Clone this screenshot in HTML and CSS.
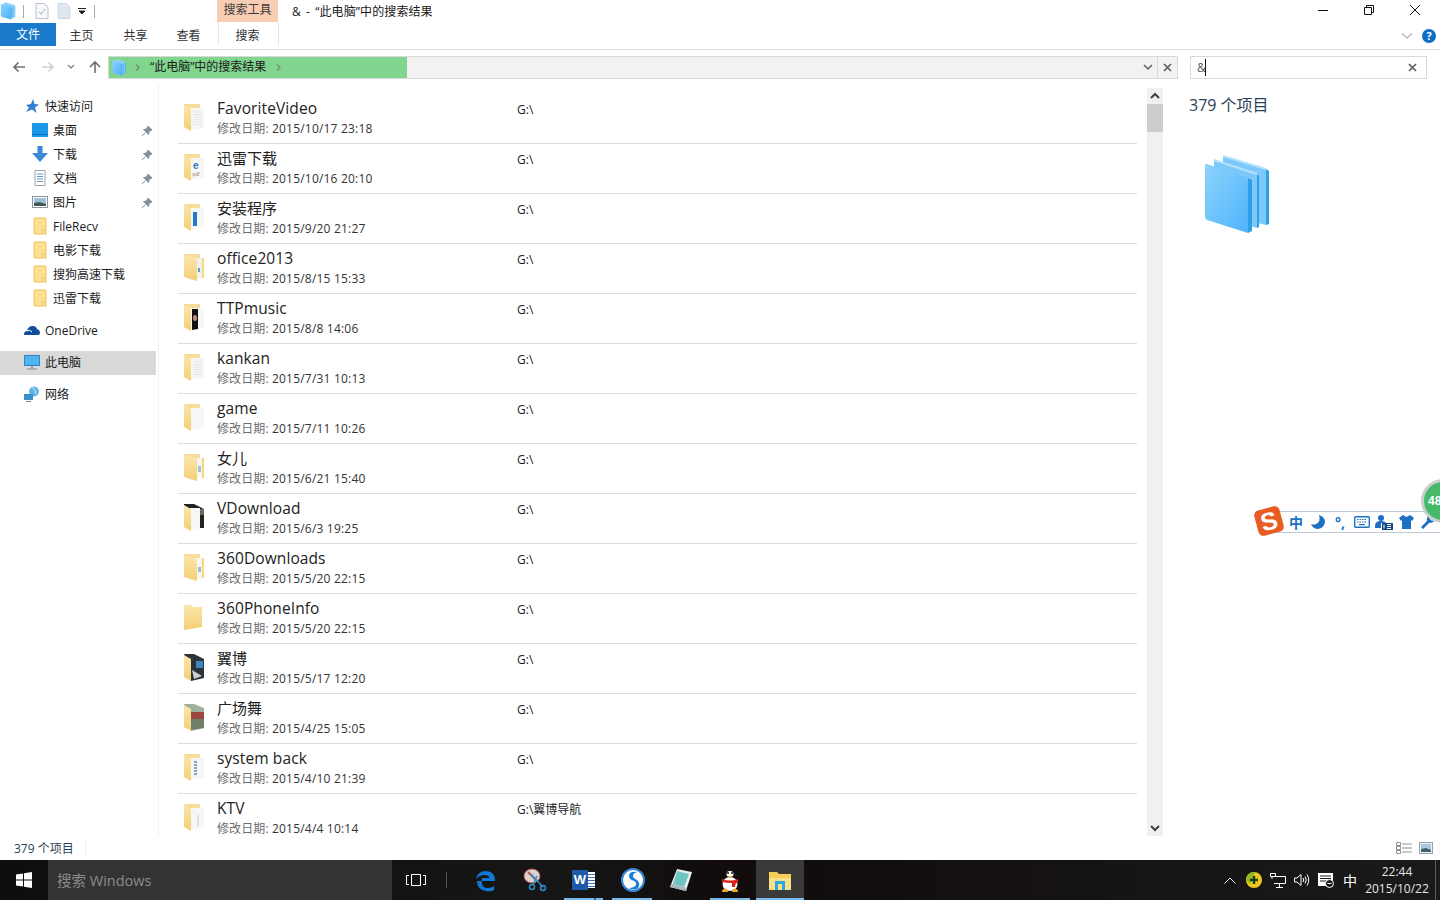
FILE: index.html
```html
<!DOCTYPE html>
<html lang="zh-CN">
<head>
    <meta charset="UTF-8">
    <title>&amp; - “此电脑”中的搜索结果</title>
    <link rel="stylesheet" href="styles.css">
</head>
<body>
    <!-- shared shapes -->
    <svg class="defs" width="0" height="0">
        <defs>
            <linearGradient id="blueFace" x1="0" y1="0" x2="1" y2="1">
                <stop offset="0" stop-color="#8dd3fb"/>
                <stop offset="1" stop-color="#4fb3fb"/>
            </linearGradient>
            <linearGradient id="flapFace" x1="0" y1="0" x2="0" y2="1">
                <stop offset="0" stop-color="#fbe6ac"/>
                <stop offset="1" stop-color="#f3cf73"/>
            </linearGradient>
            <symbol id="library" viewBox="0 0 66 80">
                <path d="M62 14 L65 16 V69 L62 70 Z" fill="#2f9fe6"/>
                <path d="M19 1 L62 14 V70 L19 60 Z" fill="#7cc8fa"/>
                <path d="M19 1 L62 14" stroke="#b5e2fc" stroke-width="2"/>
                <path d="M53 19 L55 21 V72 L53 73 Z" fill="#2f9fe6"/>
                <path d="M10 5 L53 19 V73 L10 60 Z" fill="#7cc8fa"/>
                <path d="M10 5 L53 19" stroke="#b5e2fc" stroke-width="2"/>
                <path d="M44 23 L48 25 V76 L44 78 Z" fill="#2f9fe6"/>
                <path d="M3 9 L44 23 V78 L3 65 Q1 64 1 61 V11 Q1 8 3 9 Z" fill="url(#blueFace)"/>
            </symbol>
            <symbol id="folder-back" viewBox="0 0 24 30">
                <path d="M2 2 H18 V10 H2 Z" fill="#f8dc9b"/>
                <path d="M8 6 H22 V26 L8 28 Z" fill="#f6f6f4"/>
            </symbol>
            <symbol id="folder-flap" viewBox="0 0 24 30">
                <path d="M2 3 L9 7 V29 L2 25 Z" fill="url(#flapFace)"/>
            </symbol>
            <symbol id="folder-lines" viewBox="0 0 24 30">
                <path d="M11 10 H20 M11 12.5 H20 M11 15 H20 M11 17.5 H20 M11 20 H20 M11 22.5 H20" stroke="#e6e6e6" fill="none"/>
            </symbol>
            <symbol id="nav-folder" viewBox="0 0 14 18">
                <path d="M1 1 H13 V17 H1 Z" fill="#fde08f" stroke="#e9c565"/>
                <path d="M9 17 V13 H13" fill="none" stroke="#e9c565"/>
            </symbol>
            <symbol id="pin" viewBox="0 0 12 12">
                <path d="M7 1 L11 5 L9.5 5.5 L7.5 8 L7.5 9.5 L2.5 4.5 L4 4.5 L6.5 2.5 Z M4.5 7.5 L1 11" fill="#8a9299" stroke="#8a9299"/>
            </symbol>
        </defs>
    </svg>

    <div class="desktop">
        <div class="window">
            <div class="titlebar">
                <div class="quick-tools">
                    <svg class="qa-library" width="16" height="18"><use href="#library"/></svg>
                    <i class="qa-sep"></i>
                    <svg class="qa-doc" width="14" height="16" viewBox="0 0 14 16"><path d="M1 .5 H9 L13 4 V15.5 H1 Z" fill="#f6f8fb" stroke="#b9c3cf"/><path d="M4 9 L6 11 L10 6" fill="none" stroke="#8fb0cc"/></svg>
                    <svg class="qa-doc2" width="14" height="16" viewBox="0 0 14 16"><path d="M1 .5 H9 L13 4 V15.5 H1 Z" fill="#dfe7f3" stroke="#cdd7e4"/></svg>
                    <svg class="qa-drop" width="8" height="8" viewBox="0 0 8 8"><path d="M0 1.5 H8 M1 4 H7 L4 7 Z" stroke="#222" fill="#222"/></svg>
                    <i class="qa-sep qa-sep-end"></i>
                </div>
                <div class="context-head">搜索工具</div>
                <div class="window-title">&amp; - “此电脑”中的搜索结果</div>
                <div class="window-buttons">
                    <svg class="win-btn" width="12" height="12" viewBox="0 0 12 12"><path d="M1 6.5 H11" stroke="#111"/></svg>
                    <svg class="win-btn" width="12" height="12" viewBox="0 0 12 12"><path d="M1.5 3.5 H8.5 V10.5 H1.5 Z M3.5 3.5 V1.5 H10.5 V8.5 H8.5" fill="none" stroke="#111"/></svg>
                    <svg class="win-btn" width="12" height="12" viewBox="0 0 12 12"><path d="M1 1 L11 11 M11 1 L1 11" stroke="#111"/></svg>
                </div>
            </div>

            <div class="ribbon">
                <div class="tab tab-file">文件</div>
                <div class="tab tab-home">主页</div>
                <div class="tab tab-share">共享</div>
                <div class="tab tab-view">查看</div>
                <div class="tab tab-search">搜索</div>
                <div class="ribbon-right">
                    <svg width="12" height="8" viewBox="0 0 12 8"><path d="M1 1.5 L6 6 L11 1.5" fill="none" stroke="#b4b4b4" stroke-width="1.3"/></svg>
                    <span class="help">?</span>
                </div>
            </div>

            <div class="address-row">
                <div class="nav-arrows">
                    <svg width="14" height="12" viewBox="0 0 14 12"><path d="M13 6 H2 M6.5 1.5 L2 6 L6.5 10.5" fill="none" stroke="#6e6e6e" stroke-width="1.6"/></svg>
                    <svg class="arrow-fwd" width="14" height="12" viewBox="0 0 14 12"><path d="M1 6 H12 M7.5 1.5 L12 6 L7.5 10.5" fill="none" stroke="#d0d0d0" stroke-width="1.6"/></svg>
                    <svg class="arrow-down" width="8" height="6" viewBox="0 0 8 6"><path d="M1 1 L4 4 L7 1" fill="none" stroke="#8a8a8a" stroke-width="1.4"/></svg>
                    <svg class="arrow-up" width="14" height="14" viewBox="0 0 14 14"><path d="M7 13 V2 M2 7 L7 2 L12 7" fill="none" stroke="#6e6e6e" stroke-width="1.6"/></svg>
                </div>
                <div class="address-box">
                    <div class="address-progress">
                        <svg width="16" height="17"><use href="#library"/></svg>
                        <svg class="crumb-arrow" width="5" height="7" viewBox="0 0 5 7"><path d="M1 .5 L4 3.5 L1 6.5" fill="none" stroke="#6f8f75" stroke-width="1.3"/></svg>
                        <span class="crumb">“此电脑”中的搜索结果</span>
                        <svg class="crumb-arrow" width="5" height="7" viewBox="0 0 5 7"><path d="M1 .5 L4 3.5 L1 6.5" fill="none" stroke="#6f8f75" stroke-width="1.3"/></svg>
                    </div>
                    <svg class="address-drop" width="10" height="7" viewBox="0 0 10 7"><path d="M1 1 L5 5 L9 1" fill="none" stroke="#5f5f5f" stroke-width="1.5"/></svg>
                    <div class="address-close">
                        <svg width="9" height="9" viewBox="0 0 9 9"><path d="M1 1 L8 8 M8 1 L1 8" stroke="#5f5f5f" stroke-width="1.7"/></svg>
                    </div>
                </div>
                <div class="search-box">
                    <span class="search-text">&amp;</span><i class="caret"></i>
                    <svg class="search-close" width="9" height="9" viewBox="0 0 9 9"><path d="M1 1 L8 8 M8 1 L1 8" stroke="#5f5f5f" stroke-width="1.7"/></svg>
                </div>
            </div>

            <div class="main">
                <nav class="nav-pane">
                    <div class="nav-group">
                        <div class="nav-item">
                            <svg class="nav-icon" width="16" height="16" viewBox="0 0 16 16"><path d="M9 1 L10.5 6 L15 6.5 L11 9.5 L12.5 15 L8 11.5 L2 14 L5 9.5 L2 7 L7 6 Z" fill="#2f7fd3"/></svg>
                            <span>快速访问</span>
                        </div>
                        <div class="nav-item nav-sub">
                            <svg class="nav-icon" width="16" height="14" viewBox="0 0 16 14"><rect width="16" height="14" fill="#1c97ea"/><path d="M1 11.5 H15" stroke="#0f5fa8" stroke-dasharray="2 1"/></svg>
                            <span>桌面</span>
                            <svg class="pin" width="12" height="12"><use href="#pin"/></svg>
                        </div>
                        <div class="nav-item nav-sub">
                            <svg class="nav-icon" width="16" height="16" viewBox="0 0 16 16"><path d="M5.5 0 H10.5 V7 H16 L8 16 L0 7 H5.5 Z" fill="#3c87d6"/></svg>
                            <span>下载</span>
                            <svg class="pin" width="12" height="12"><use href="#pin"/></svg>
                        </div>
                        <div class="nav-item nav-sub">
                            <svg class="nav-icon" width="16" height="16" viewBox="0 0 16 16"><path d="M3 .5 H13 V15.5 H3 Z" fill="#fff" stroke="#9aa4ad"/><path d="M5 4 H11 M5 6.5 H11 M5 9 H11 M5 11.5 H11" stroke="#5f9bc6"/></svg>
                            <span>文档</span>
                            <svg class="pin" width="12" height="12"><use href="#pin"/></svg>
                        </div>
                        <div class="nav-item nav-sub">
                            <svg class="nav-icon" width="16" height="14" viewBox="0 0 16 14"><rect x=".5" y="1.5" width="15" height="11" fill="#fff" stroke="#8b9299"/><rect x="2" y="3" width="12" height="8" fill="#9dc0d6"/><path d="M2 11 V8 L7 7 L14 9 V11 Z" fill="#3f5a56"/></svg>
                            <span>图片</span>
                            <svg class="pin" width="12" height="12"><use href="#pin"/></svg>
                        </div>
                        <div class="nav-item nav-sub">
                            <svg class="nav-icon nav-folder" width="14" height="18"><use href="#nav-folder"/></svg>
                            <span>FileRecv</span>
                        </div>
                        <div class="nav-item nav-sub">
                            <svg class="nav-icon nav-folder" width="14" height="18"><use href="#nav-folder"/></svg>
                            <span>电影下载</span>
                        </div>
                        <div class="nav-item nav-sub">
                            <svg class="nav-icon nav-folder" width="14" height="18"><use href="#nav-folder"/></svg>
                            <span>搜狗高速下载</span>
                        </div>
                        <div class="nav-item nav-sub">
                            <svg class="nav-icon nav-folder" width="14" height="18"><use href="#nav-folder"/></svg>
                            <span>迅雷下载</span>
                        </div>
                    </div>
                    <div class="nav-group">
                        <div class="nav-item">
                            <svg class="nav-icon" width="16" height="12" viewBox="0 0 16 12"><path d="M0 11 Q0 7 3 7 Q4 2 9 2 Q12 2 13 5 Q16 6 16 9 Q16 11 14 11 Z" fill="#124a9c"/><path d="M3 7 Q6 5 8 8" fill="none" stroke="#fff"/></svg>
                            <span>OneDrive</span>
                        </div>
                    </div>
                    <div class="nav-group">
                        <div class="nav-item nav-selected">
                            <svg class="nav-icon" width="16" height="15" viewBox="0 0 16 15"><rect x=".5" y=".5" width="15" height="10" fill="#4fb3ee" stroke="#2b87c7"/><path d="M3 14 H13" stroke="#8ea3b3" stroke-width="1.5"/><path d="M7 11 H9 V13 H7 Z" fill="#8ea3b3"/></svg>
                            <span>此电脑</span>
                        </div>
                    </div>
                    <div class="nav-group">
                        <div class="nav-item">
                            <svg class="nav-icon" width="16" height="16" viewBox="0 0 16 16"><circle cx="10" cy="5.5" r="5" fill="#62b4e6"/><path d="M8 1 Q12 3 12 8" fill="none" stroke="#d5ecf8"/><rect x="0" y="8" width="9" height="6" fill="#3d8fc9"/><path d="M2 15.5 H7" stroke="#6d8ca3"/></svg>
                            <span>网络</span>
                        </div>
                    </div>
                </nav>

                <div class="file-list">
                    <div class="file-row">
                        <svg class="folder" width="24" height="30" viewBox="0 0 24 30"><use href="#folder-back" width="24" height="30"/><use href="#folder-lines" width="24" height="30"/><use href="#folder-flap" width="24" height="30"/></svg>
                        <div><div class="file-name">FavoriteVideo</div><div class="file-date"><span>修改日期:</span> 2015/10/17 23:18</div></div>
                        <div class="file-path">G:\</div>
                    </div>
                    <div class="file-row">
                        <svg class="folder" width="24" height="30" viewBox="0 0 24 30"><use href="#folder-back" width="24" height="30"/><text class="thumb-e" x="11" y="17">e</text><text class="thumb-pdf" x="10.5" y="24">pdf</text><use href="#folder-flap" width="24" height="30"/></svg>
                        <div><div class="file-name file-name-zh">迅雷下载</div><div class="file-date"><span>修改日期:</span> 2015/10/16 20:10</div></div>
                        <div class="file-path">G:\</div>
                    </div>
                    <div class="file-row">
                        <svg class="folder" width="24" height="30" viewBox="0 0 24 30"><use href="#folder-back" width="24" height="30"/><rect x="11" y="10" width="4" height="14" fill="#1f78c8"/><use href="#folder-flap" width="24" height="30"/></svg>
                        <div><div class="file-name file-name-zh">安装程序</div><div class="file-date"><span>修改日期:</span> 2015/9/20 21:27</div></div>
                        <div class="file-path">G:\</div>
                    </div>
                    <div class="file-row">
                        <svg class="folder" width="24" height="30" viewBox="0 0 24 30"><use href="#folder-back" width="24" height="30"/><path d="M14 6 H20 V26 H14 Z" fill="#eef1ee"/><path d="M16 16 H18 V20 H16 Z" fill="#5f9fb5"/><path d="M2 3 L15 7 V29 L2 25 Z" fill="url(#flapFace)"/><path d="M20 6 H22 V26 H20 Z" fill="#f6d67f"/></svg>
                        <div><div class="file-name">office2013</div><div class="file-date"><span>修改日期:</span> 2015/8/15 15:33</div></div>
                        <div class="file-path">G:\</div>
                    </div>
                    <div class="file-row">
                        <svg class="folder" width="24" height="30" viewBox="0 0 24 30"><use href="#folder-back" width="24" height="30"/><path d="M10 7 H16 V27 L10 28 Z" fill="#111"/><ellipse cx="13" cy="16" rx="2" ry="3" fill="#c98a7a"/><use href="#folder-flap" width="24" height="30"/></svg>
                        <div><div class="file-name">TTPmusic</div><div class="file-date"><span>修改日期:</span> 2015/8/8 14:06</div></div>
                        <div class="file-path">G:\</div>
                    </div>
                    <div class="file-row">
                        <svg class="folder" width="24" height="30" viewBox="0 0 24 30"><use href="#folder-back" width="24" height="30"/><use href="#folder-lines" width="24" height="30"/><use href="#folder-flap" width="24" height="30"/></svg>
                        <div><div class="file-name">kankan</div><div class="file-date"><span>修改日期:</span> 2015/7/31 10:13</div></div>
                        <div class="file-path">G:\</div>
                    </div>
                    <div class="file-row">
                        <svg class="folder" width="24" height="30" viewBox="0 0 24 30"><use href="#folder-back" width="24" height="30"/><use href="#folder-flap" width="24" height="30"/></svg>
                        <div><div class="file-name">game</div><div class="file-date"><span>修改日期:</span> 2015/7/11 10:26</div></div>
                        <div class="file-path">G:\</div>
                    </div>
                    <div class="file-row">
                        <svg class="folder" width="24" height="30" viewBox="0 0 24 30"><use href="#folder-back" width="24" height="30"/><path d="M16 14 H19 V20 H16 Z" fill="#a9c2cf"/><path d="M2 3 L15 7 V29 L2 25 Z" fill="url(#flapFace)"/><path d="M20 6 H22 V26 H20 Z" fill="#f6d67f"/></svg>
                        <div><div class="file-name file-name-zh">女儿</div><div class="file-date"><span>修改日期:</span> 2015/6/21 15:40</div></div>
                        <div class="file-path">G:\</div>
                    </div>
                    <div class="file-row">
                        <svg class="folder" width="24" height="30" viewBox="0 0 24 30"><path d="M2 2 H12 L22 7 V10 H2 Z" fill="#222"/><path d="M8 6 H18 V26 L8 28 Z" fill="#f6f6f4"/><path d="M18 7 H22 V13 H18 Z" fill="#6f6a5e"/><path d="M18 13 H22 V26 H18 Z" fill="#222"/><use href="#folder-flap" width="24" height="30"/></svg>
                        <div><div class="file-name">VDownload</div><div class="file-date"><span>修改日期:</span> 2015/6/3 19:25</div></div>
                        <div class="file-path">G:\</div>
                    </div>
                    <div class="file-row">
                        <svg class="folder" width="24" height="30" viewBox="0 0 24 30"><use href="#folder-back" width="24" height="30"/><path d="M16 15 H19 V20 H16 Z" fill="#9dbad0"/><path d="M2 3 L15 7 V29 L2 25 Z" fill="url(#flapFace)"/><path d="M20 6 H22 V26 H20 Z" fill="#f6d67f"/></svg>
                        <div><div class="file-name">360Downloads</div><div class="file-date"><span>修改日期:</span> 2015/5/20 22:15</div></div>
                        <div class="file-path">G:\</div>
                    </div>
                    <div class="file-row">
                        <svg class="folder" width="24" height="30" viewBox="0 0 24 30"><path d="M2 3 H10 V5 H20 V25 L2 28 Z" fill="url(#flapFace)"/></svg>
                        <div><div class="file-name">360PhoneInfo</div><div class="file-date"><span>修改日期:</span> 2015/5/20 22:15</div></div>
                        <div class="file-path">G:\</div>
                    </div>
                    <div class="file-row">
                        <svg class="folder" width="24" height="30" viewBox="0 0 24 30"><path d="M2 2 H12 L22 7 V26 L9 29 Z" fill="#2b3238"/><path d="M14 9 H21 V16 H14 Z" fill="#3f87b8"/><path d="M10 18 L20 24 L12 27 Z" fill="#c9cfd3"/><use href="#folder-flap" width="24" height="30"/></svg>
                        <div><div class="file-name file-name-zh">翼博</div><div class="file-date"><span>修改日期:</span> 2015/5/17 12:20</div></div>
                        <div class="file-path">G:\</div>
                    </div>
                    <div class="file-row">
                        <svg class="folder" width="24" height="30" viewBox="0 0 24 30"><path d="M2 2 H12 L22 6 V26 L9 29 Z" fill="#9db3a0"/><path d="M9 10 H22 V17 H9 Z" fill="#9a4a3c"/><path d="M9 17 H22 V26 L9 28 Z" fill="#6f7f6a"/><use href="#folder-flap" width="24" height="30"/></svg>
                        <div><div class="file-name file-name-zh">广场舞</div><div class="file-date"><span>修改日期:</span> 2015/4/25 15:05</div></div>
                        <div class="file-path">G:\</div>
                    </div>
                    <div class="file-row">
                        <svg class="folder" width="24" height="30" viewBox="0 0 24 30"><use href="#folder-back" width="24" height="30"/><path d="M12 10 H15 M12 13 H15 M12 16 H15 M12 19 H15 M12 22 H15" stroke="#6f87a8" stroke-width="1.3"/><use href="#folder-flap" width="24" height="30"/></svg>
                        <div><div class="file-name">system back</div><div class="file-date"><span>修改日期:</span> 2015/4/10 21:39</div></div>
                        <div class="file-path">G:\</div>
                    </div>
                    <div class="file-row">
                        <svg class="folder" width="24" height="30" viewBox="0 0 24 30"><use href="#folder-back" width="24" height="30"/><path d="M16 13 V24" stroke="#c9c9c9"/><use href="#folder-flap" width="24" height="30"/></svg>
                        <div><div class="file-name">KTV</div><div class="file-date"><span>修改日期:</span> 2015/4/4 10:14</div></div>
                        <div class="file-path">G:\翼博导航</div>
                    </div>
                </div>

                <div class="scrollbar">
                    <svg class="scroll-arrow" width="16" height="16" viewBox="0 0 16 16"><path d="M4 10 L8 6 L12 10" fill="none" stroke="#404040" stroke-width="2"/></svg>
                    <div class="scroll-thumb"></div>
                    <div class="scroll-track"></div>
                    <svg class="scroll-arrow" width="16" height="16" viewBox="0 0 16 16"><path d="M4 6 L8 10 L12 6" fill="none" stroke="#404040" stroke-width="2"/></svg>
                </div>

                <aside class="details">
                    <div class="details-count">379 个项目</div>
                    <svg class="details-icon" width="66" height="80"><use href="#library"/></svg>
                </aside>
            </div>

            <div class="statusbar">
                <span class="status-count">379 个项目</span>
                <div class="view-icons">
                    <svg width="16" height="12" viewBox="0 0 16 12"><path d="M.5 .5 H4.5 V3.5 H.5 Z M.5 4.5 H4.5 V7.5 H.5 Z M.5 8.5 H4.5 V11.5 H.5 Z M6 2 H16 M6 6 H16 M6 10 H16" fill="none" stroke="#8f8f8f"/></svg>
                    <svg width="14" height="12" viewBox="0 0 14 12"><rect x=".5" y=".5" width="13" height="11" fill="#eaf2f8" stroke="#8da2b3"/><rect x="2" y="2" width="10" height="8" fill="#a9c8dc"/><path d="M2 10 V7 L7 6 L12 8 V10 Z" fill="#45606a"/></svg>
                </div>
            </div>
        </div>

        <div class="taskbar">
            <div class="start">
                <svg width="16" height="16" viewBox="0 0 16 16"><path d="M0 2.5 L7 1.5 V7.5 H0 Z M8 1.3 L16 0 V7.5 H8 Z M0 8.5 H7 V14.5 L0 13.5 Z M8 8.5 H16 V16 L8 14.7 Z" fill="#fff"/></svg>
            </div>
            <div class="task-search">搜索 Windows</div>
            <div class="task-view">
                <svg width="20" height="14" viewBox="0 0 20 14"><path d="M5.5 1.5 H14.5 V12.5 H5.5 Z M3 2.5 H.5 V11.5 H3 M17 2.5 H19.5 V11.5 H17" fill="none" stroke="#fff"/></svg>
            </div>
            <i class="task-sep"></i>
            <div class="task-apps">
                <div class="app">
                    <svg width="24" height="24" viewBox="0 0 24 24"><path d="M3 13 H21 Q21 3 12 3 Q4 3 2 11 Q6 7 10 7 Q15 7 15.5 10 H8 Q6 20 14 20 Q18 20 20 18 V22 Q17 24 12 23 Q3 22 3 13 Z" fill="#0f78d4"/></svg>
                </div>
                <div class="app">
                    <svg width="24" height="24" viewBox="0 0 24 24"><ellipse cx="9" cy="8" rx="8" ry="7" fill="#d8d4d2" stroke="#c0504d"/><path d="M5 4 L13 12" stroke="#c0504d" stroke-width="2"/><path d="M8 6 L20 19 M14 8 L10 17" stroke="#2a8fc4" stroke-width="1.5"/><circle cx="20" cy="20" r="2.5" fill="none" stroke="#2a8fc4" stroke-width="1.5"/><circle cx="9" cy="19" r="2.5" fill="none" stroke="#2a8fc4" stroke-width="1.5"/></svg>
                </div>
                <div class="app app-open app-stacked">
                    <div class="word-icon"><span>W</span><i></i></div>
                </div>
                <div class="app app-open">
                    <svg width="24" height="24" viewBox="0 0 24 24"><circle cx="12" cy="12" r="11.5" fill="#fff"/><path d="M16 4 Q8 3 8 8 Q8 11 12 12.5 Q16 14 15 17 Q13 20 8 20 Q13 23 17 20 Q20 16 16 12 Q12 10 12 8 Q12 5 16 4 Z" fill="#1d7cd6"/><circle cx="12" cy="12" r="11" fill="none" stroke="#2f86d8" stroke-width="2"/></svg>
                </div>
                <div class="app">
                    <svg width="24" height="24" viewBox="0 0 24 24"><path d="M8 1 L23 4 L17 23 L1 19 Z" fill="#e8eef0"/><path d="M8 3 L20 6 L15 19 L4 16 Z" fill="#6fc4c0"/><path d="M1 19 L17 23 L18 20 L3 16 Z" fill="#a8b6bc"/></svg>
                </div>
                <div class="app app-open">
                    <svg width="22" height="26" viewBox="0 0 22 26"><ellipse cx="11" cy="9" rx="7" ry="9" fill="#111"/><ellipse cx="11" cy="17" rx="7.5" ry="7" fill="#fff"/><ellipse cx="11" cy="7" rx="3.5" ry="3" fill="#fff"/><circle cx="9" cy="6" r="1" fill="#111"/><circle cx="13" cy="6" r="1" fill="#111"/><path d="M8.5 9 H13.5 L11 11 Z" fill="#f0a81e"/><path d="M3 12 Q11 15 19 12 L19 15 Q16 16 16 20 L13 20 L13 16 Q8 16 3 15 Z" fill="#d9241c"/><path d="M3 25 Q3 21 8 22 L9 25 Z M19 25 Q19 21 14 22 L13 25 Z" fill="#f0a81e"/></svg>
                </div>
                <div class="app app-open app-active">
                    <svg width="22" height="20" viewBox="0 0 22 20"><path d="M0 2 H8 L10 4 H22 V20 H0 Z" fill="#f5cc58"/><path d="M0 8 H22 V20 H0 Z" fill="#fbe08a"/><path d="M6 11 H16 V20 H13 V14 H9 V20 H6 Z" fill="#29a9e0"/></svg>
                </div>
            </div>
            <div class="tray">
                <div class="tray-item"><svg width="12" height="7" viewBox="0 0 12 7"><path d="M.5 6.5 L6 1 L11.5 6.5" fill="none" stroke="#fff"/></svg></div>
                <div class="tray-item"><svg width="16" height="16" viewBox="0 0 16 16"><circle cx="8" cy="8" r="8" fill="#efc81f"/><path d="M0 8 A8 8 0 0 1 9 0 L4 12 Z" fill="#8fbb22"/><path d="M8 4 V12 M4 8 H12" stroke="#1d3d0a" stroke-width="2.4"/></svg></div>
                <div class="tray-item"><svg width="16" height="15" viewBox="0 0 16 15"><path d="M3.5 3.5 H15.5 V10.5 H4 M.5 .5 H5.5 V3.5 H.5 Z M2 3.5 V6 M9.5 10.5 V14 M6 14.5 H13" fill="none" stroke="#fff"/></svg></div>
                <div class="tray-item"><svg width="16" height="14" viewBox="0 0 16 14"><path d="M.5 5 H3 L7 1.5 V12.5 L3 9 H.5 Z M9 5 Q10.5 7 9 9 M11 3.5 Q13.5 7 11 10.5 M13 1.5 Q16.5 7 13 12.5" fill="none" stroke="#fff"/></svg></div>
                <div class="tray-item"><svg width="16" height="15" viewBox="0 0 16 15"><path d="M0 0 H15 V9 H11 L8 12 V13 H0 Z" fill="#fff"/><path d="M2 3 H13 M2 5.5 H13 M2 8 H8" stroke="#1a1a1a"/><circle cx="11.5" cy="10.5" r="4" fill="#1a1a1a" stroke="#fff"/><path d="M9.5 10.5 H13.5" stroke="#fff"/></svg></div>
                <div class="tray-item tray-lang">中</div>
            </div>
            <div class="clock">
                <div>22:44</div>
                <div>2015/10/22</div>
            </div>
            <i class="show-desktop"></i>
        </div>

        <!-- floating input method bar -->
        <div class="ime-bar">
            <span class="ime-logo"><b>S</b></span>
            <span class="ime-slot ime-text">中</span>
            <span class="ime-slot"><svg width="14" height="14" viewBox="0 0 14 14"><path d="M8 0 Q10 7 5 9 Q3 10 0 9 Q2 14 7 14 Q13 13 14 7 Q14 2 8 0 Z" fill="#1d6fc2"/></svg></span>
            <span class="ime-slot ime-text">°,</span>
            <span class="ime-slot"><svg width="16" height="12" viewBox="0 0 16 12"><rect x=".7" y=".7" width="14.6" height="10.6" rx="1" fill="#fff" stroke="#1d6fc2" stroke-width="1.4"/><path d="M3 3.5 H13 M3 6 H13" stroke="#1d6fc2" stroke-width="1.2" stroke-dasharray="1.5 1"/><path d="M5 8.6 H11" stroke="#1d6fc2" stroke-width="1.2"/></svg></span>
            <span class="ime-slot"><svg width="18" height="15" viewBox="0 0 18 15"><circle cx="6" cy="3" r="3" fill="#1d6fc2"/><path d="M0 11 Q0 6 6 6 Q10 6 11 8 H6 V13 H0 Z" fill="#1d6fc2"/><rect x="7" y="8" width="11" height="7" fill="#14477d"/><path d="M9 9.5 V13.5 M12 9.5 H16 M12 11.5 H16 M12 13.5 H16" stroke="#fff"/></svg></span>
            <span class="ime-slot"><svg width="15" height="14" viewBox="0 0 15 14"><path d="M4 0 L7.5 2 L11 0 L15 3 L13 6 L12 5 V14 H3 V5 L2 6 L0 3 Z" fill="#1d6fc2"/></svg></span>
            <span class="ime-slot"><svg width="14" height="14" viewBox="0 0 14 14"><path d="M0 12 L6 6 Q5 1 10 0 L8 3 L11 6 L14 4 Q13 8 8 8 L2 14 Z" fill="#1d6fc2"/></svg></span>
        </div>
        <div class="ime-badge">48</div>
    </div>
</body>
</html>
```

FILE: styles.css
```css
:root {
    --ui-font: "Open Sans", "Noto Sans CJK SC", sans-serif;
    --line-color: #dcdcdc;
    --text-dark: #1a1a1a;
    --text-grey: #6d6d6d;
    --status-blue: #2b3f55;
}

* {
    box-sizing: border-box;
}

html, body {
    margin: 0;
    height: 100%;
    overflow: hidden;
}

body {
    font-family: var(--ui-font);
    font-size: 12px;
    color: var(--text-dark);
    background-color: #fff;
}

svg {
    display: block;
    flex: none;
}

.defs {
    position: absolute;
}

.desktop {
    position: relative;
    width: 1440px;
    height: 900px;
    overflow: hidden;
    display: flex;
    flex-direction: column;
}

.window {
    height: 860px;
    display: flex;
    flex-direction: column;
}

/* title bar */
.titlebar {
    height: 22px;
    display: flex;
    align-items: center;
    flex: none;
}

.quick-tools {
    width: 217px;
    display: flex;
    align-items: center;
    height: 22px;
}

.qa-sep {
    width: 1px;
    height: 13px;
    margin-left: 7px;
    background-color: #a8a8a8;
}

.qa-doc {
    margin-left: 11px;
}

.qa-doc2 {
    margin-left: 8px;
}

.qa-drop {
    margin-left: 7px;
}

.qa-sep-end {
    margin-left: 8px;
}

.context-head {
    width: 61px;
    height: 22px;
    line-height: 20px;
    text-align: center;
    background-color: #f9cdb4;
    color: #3b3b3b;
}

.window-title {
    margin-left: 14px;
    word-spacing: 2px;
    letter-spacing: 0.1px;
}

.window-buttons {
    margin-left: auto;
    display: flex;
    gap: 33px;
    padding-right: 19px;
    margin-top: -2px;
}

.win-btn:first-child {
    margin-right: 1px;
    margin-left: -1px;
}

.win-btn:nth-child(2) {
    margin-right: 1px;
}

/* ribbon tabs */
.ribbon {
    height: 28px;
    display: flex;
    flex: none;
    border-bottom: 1px solid var(--line-color);
    padding-bottom: 4px;
    position: relative;
}

.tab {
    width: 53px;
    line-height: 27px;
    text-align: center;
    color: #333;
}

.tab-file {
    width: 56px;
    height: 23px;
    margin-top: 1px;
    line-height: 24px;
    color: #fff;
    background-color: #1979ca;
}

.tab-home {
    margin-left: -1px;
    margin-right: 1px;
}

.tab-search {
    width: 61px;
    margin-left: 3px;
    padding-right: 2px;
    border-left: 1px solid #e4e4e4;
    border-right: 1px solid #e4e4e4;
}

.ribbon-right {
    margin-left: auto;
    display: flex;
    align-items: center;
    gap: 9px;
    padding-right: 4px;
    margin-top: 4px;
}

.help {
    width: 14px;
    height: 14px;
    border-radius: 50%;
    background-color: #0d6fc4;
    color: #fff;
    font-size: 11px;
    font-weight: 700;
    line-height: 14px;
    text-align: center;
}

/* address row */
.address-row {
    height: 34px;
    flex: none;
    display: flex;
    padding-top: 6px;
}

.nav-arrows {
    width: 108px;
    display: flex;
    align-items: center;
    padding-left: 12px;
    height: 22px;
}

.arrow-fwd {
    margin-left: 15px;
}

.arrow-down {
    margin-left: 12px;
}

.arrow-up {
    margin-left: 13px;
}

.address-box {
    width: 1070px;
    height: 23px;
    display: flex;
    align-items: center;
    background-color: #f2f2f2;
    border: 1px solid #d9d9d9;
}

.address-progress {
    width: 298px;
    height: 21px;
    padding-left: 2px;
    display: flex;
    align-items: center;
    background-color: #81d58f;
}

.crumb-arrow {
    margin-left: 8px;
}

.crumb {
    margin-left: 10px;
    padding-bottom: 3px;
}

.crumb + .crumb-arrow {
    margin-left: 10px;
}

.address-drop {
    margin-left: auto;
    margin-right: 4px;
}

.address-close {
    width: 20px;
    height: 21px;
    border-left: 1px solid #d9d9d9;
    display: flex;
    align-items: center;
    justify-content: center;
}

.search-box {
    width: 237px;
    height: 23px;
    margin-left: 12px;
    display: flex;
    align-items: center;
    padding-left: 6px;
    border: 1px solid #d9d9d9;
}

.search-text {
    color: #555;
    margin-right: -1px;
}

.caret {
    width: 1px;
    height: 17px;
    background-color: #111;
}

.search-close {
    margin-left: auto;
    margin-right: 9px;
}

/* main area */
.main {
    flex: 1;
    min-height: 0;
    display: flex;
}

.nav-pane {
    width: 159px;
    flex: none;
    padding: 10px 2px 0 0;
    display: flex;
    flex-direction: column;
    gap: 8px;
    border-right: 1px solid #f2f2f2;
}

.nav-item {
    position: relative;
    height: 24px;
    display: flex;
    align-items: center;
    padding-left: 24px;
    gap: 5px;
}

.nav-sub {
    padding-left: 32px;
}

.nav-folder {
    margin-left: 1px;
    margin-right: 1px;
}

.nav-selected {
    background-color: #d9d9d9;
    margin-top: 1px;
    margin-bottom: -1px;
    padding-bottom: 2px;
}

.pin {
    position: absolute;
    right: 3px;
    top: 7px;
}

.file-list {
    flex: 1;
    min-width: 0;
    padding: 10px 10px 0 19px;
    overflow: hidden;
}

.file-row {
    height: 50px;
    display: grid;
    grid-template-columns: 39px 300px 1fr;
    border-bottom: 1px solid var(--line-color);
}

.file-row:last-child {
    border-bottom: none;
}

.folder {
    margin: 8px 0 0 4px;
}

.thumb-e {
    font: 700 10px "Liberation Sans", sans-serif;
    fill: #2a78c5;
}

.thumb-pdf {
    font: 5px "Liberation Sans", sans-serif;
    fill: #888;
}

.file-name {
    font-size: 15.5px;
    line-height: 20px;
    margin-top: 4px;
    letter-spacing: 0.1px;
    color: #222;
}

.file-name-zh {
    font-size: 15px;
    letter-spacing: 0;
}

.file-date {
    font-size: 12px;
    line-height: 16px;
    margin-top: 3px;
    letter-spacing: 0.2px;
    color: #333;
}

.file-date span {
    color: var(--text-grey);
    letter-spacing: 0.1px;
}

.file-path {
    margin-top: 8px;
    line-height: 16px;
}

/* scrollbar */
.scrollbar {
    width: 16px;
    flex: none;
    margin-top: 4px;
    display: flex;
    flex-direction: column;
    background-color: #f0f0f0;
}

.scroll-thumb {
    height: 28px;
    background-color: #cdcdcd;
}

.scroll-track {
    flex: 1;
}

.details {
    width: 277px;
    flex: none;
    padding: 10px 0 0 26px;
}

.details-count {
    font-size: 16px;
    line-height: 22px;
    color: var(--status-blue);
}

.details-icon {
    margin: 39px 0 0 15px;
}

/* status bar */
.statusbar {
    height: 24px;
    flex: none;
    display: flex;
    align-items: center;
    padding: 0 7px 0 14px;
    color: var(--status-blue);
}

.status-count {
    padding-right: 11px;
    border-right: 1px solid #f0f0f0;
}

.view-icons {
    margin-left: auto;
    display: flex;
    align-items: center;
    gap: 7px;
}

/* taskbar */
.taskbar {
    height: 40px;
    flex: none;
    display: flex;
    align-items: center;
    color: #fff;
    background: linear-gradient(90deg, #0e0e0e 0%, #161616 40%, #110b0b 50%, #1a1a1a 100%);
}

.start {
    width: 48px;
    display: flex;
    justify-content: center;
}

.task-search {
    width: 344px;
    height: 40px;
    line-height: 42px;
    padding-left: 9px;
    font-size: 14.5px;
    color: #8b8b8b;
    background-color: #333;
}

.task-view {
    width: 48px;
    display: flex;
    justify-content: center;
}

.task-sep {
    width: 1px;
    height: 16px;
    margin: 0 15px 0 6px;
    background-color: #555;
}

.task-apps {
    display: flex;
    height: 40px;
}

.app {
    position: relative;
    width: 48.75px;
    display: flex;
    align-items: center;
    justify-content: center;
}

.app-open::after {
    content: "";
    position: absolute;
    left: 4px;
    right: 5px;
    bottom: 0;
    height: 2px;
    background-color: #76b9ed;
}

.app-stacked::after {
    background: linear-gradient(90deg, #76b9ed 0 78%, #3f5f78 78% 81%, #76b9ed 81%);
}

.app-active {
    width: 48px;
    margin-left: 1px;
    background-color: #3a3a3a;
}

.app-active::after {
    left: 0;
    right: 0;
}

.word-icon {
    width: 24px;
    height: 24px;
    position: relative;
    display: flex;
    align-items: center;
}

.word-icon span {
    width: 16px;
    height: 20px;
    background-color: #1f5aa8;
    font: 700 13px/20px "Liberation Sans", sans-serif;
    text-align: center;
    position: relative;
    z-index: 1;
}

.word-icon i {
    position: absolute;
    right: 1px;
    top: 4px;
    width: 10px;
    height: 16px;
    background: repeating-linear-gradient(180deg, #fff 0 2px, #3a6db2 2px 3px);
}

.tray {
    margin-left: auto;
    display: flex;
    align-items: center;
}

.tray-item {
    width: 24px;
    display: flex;
    justify-content: center;
}

.tray-lang {
    font-size: 14px;
}

.clock {
    width: 70px;
    text-align: center;
    font-size: 12px;
    line-height: 17px;
    color: #e6e6e6;
}

.show-desktop {
    width: 5px;
    height: 40px;
    margin-left: 3px;
    border-left: 1px solid #5a5a5a;
}

/* floating bits */
.ime-bar {
    position: absolute;
    left: 1268px;
    top: 511px;
    width: 172px;
    height: 22px;
    display: flex;
    align-items: center;
    padding-left: 17px;
    background-color: #fff;
    border-top: 1px solid #bcc9d6;
    border-bottom: 1px solid #bcc9d6;
}

.ime-slot {
    width: 22px;
    flex: none;
    display: flex;
    justify-content: center;
}

.ime-logo {
    position: absolute;
    left: -12px;
    top: -4px;
    width: 26px;
    height: 26px;
    border-radius: 5px;
    background-color: #ea5a23;
    transform: rotate(-15deg);
    text-align: center;
}

.ime-logo b {
    font: 900 25px/26px "Liberation Sans", sans-serif;
    color: #fff;
}

.ime-text {
    color: #1d6fc2;
    font-weight: 700;
    font-size: 14px;
}

.ime-badge {
    position: absolute;
    left: 1421px;
    top: 479px;
    width: 44px;
    height: 44px;
    border-radius: 50%;
    background-color: #46b96b;
    border: 3px solid #c9d0cc;
    color: #fff;
    font: 700 12px/38px "Liberation Sans", sans-serif;
    padding-left: 4px;
}
```
